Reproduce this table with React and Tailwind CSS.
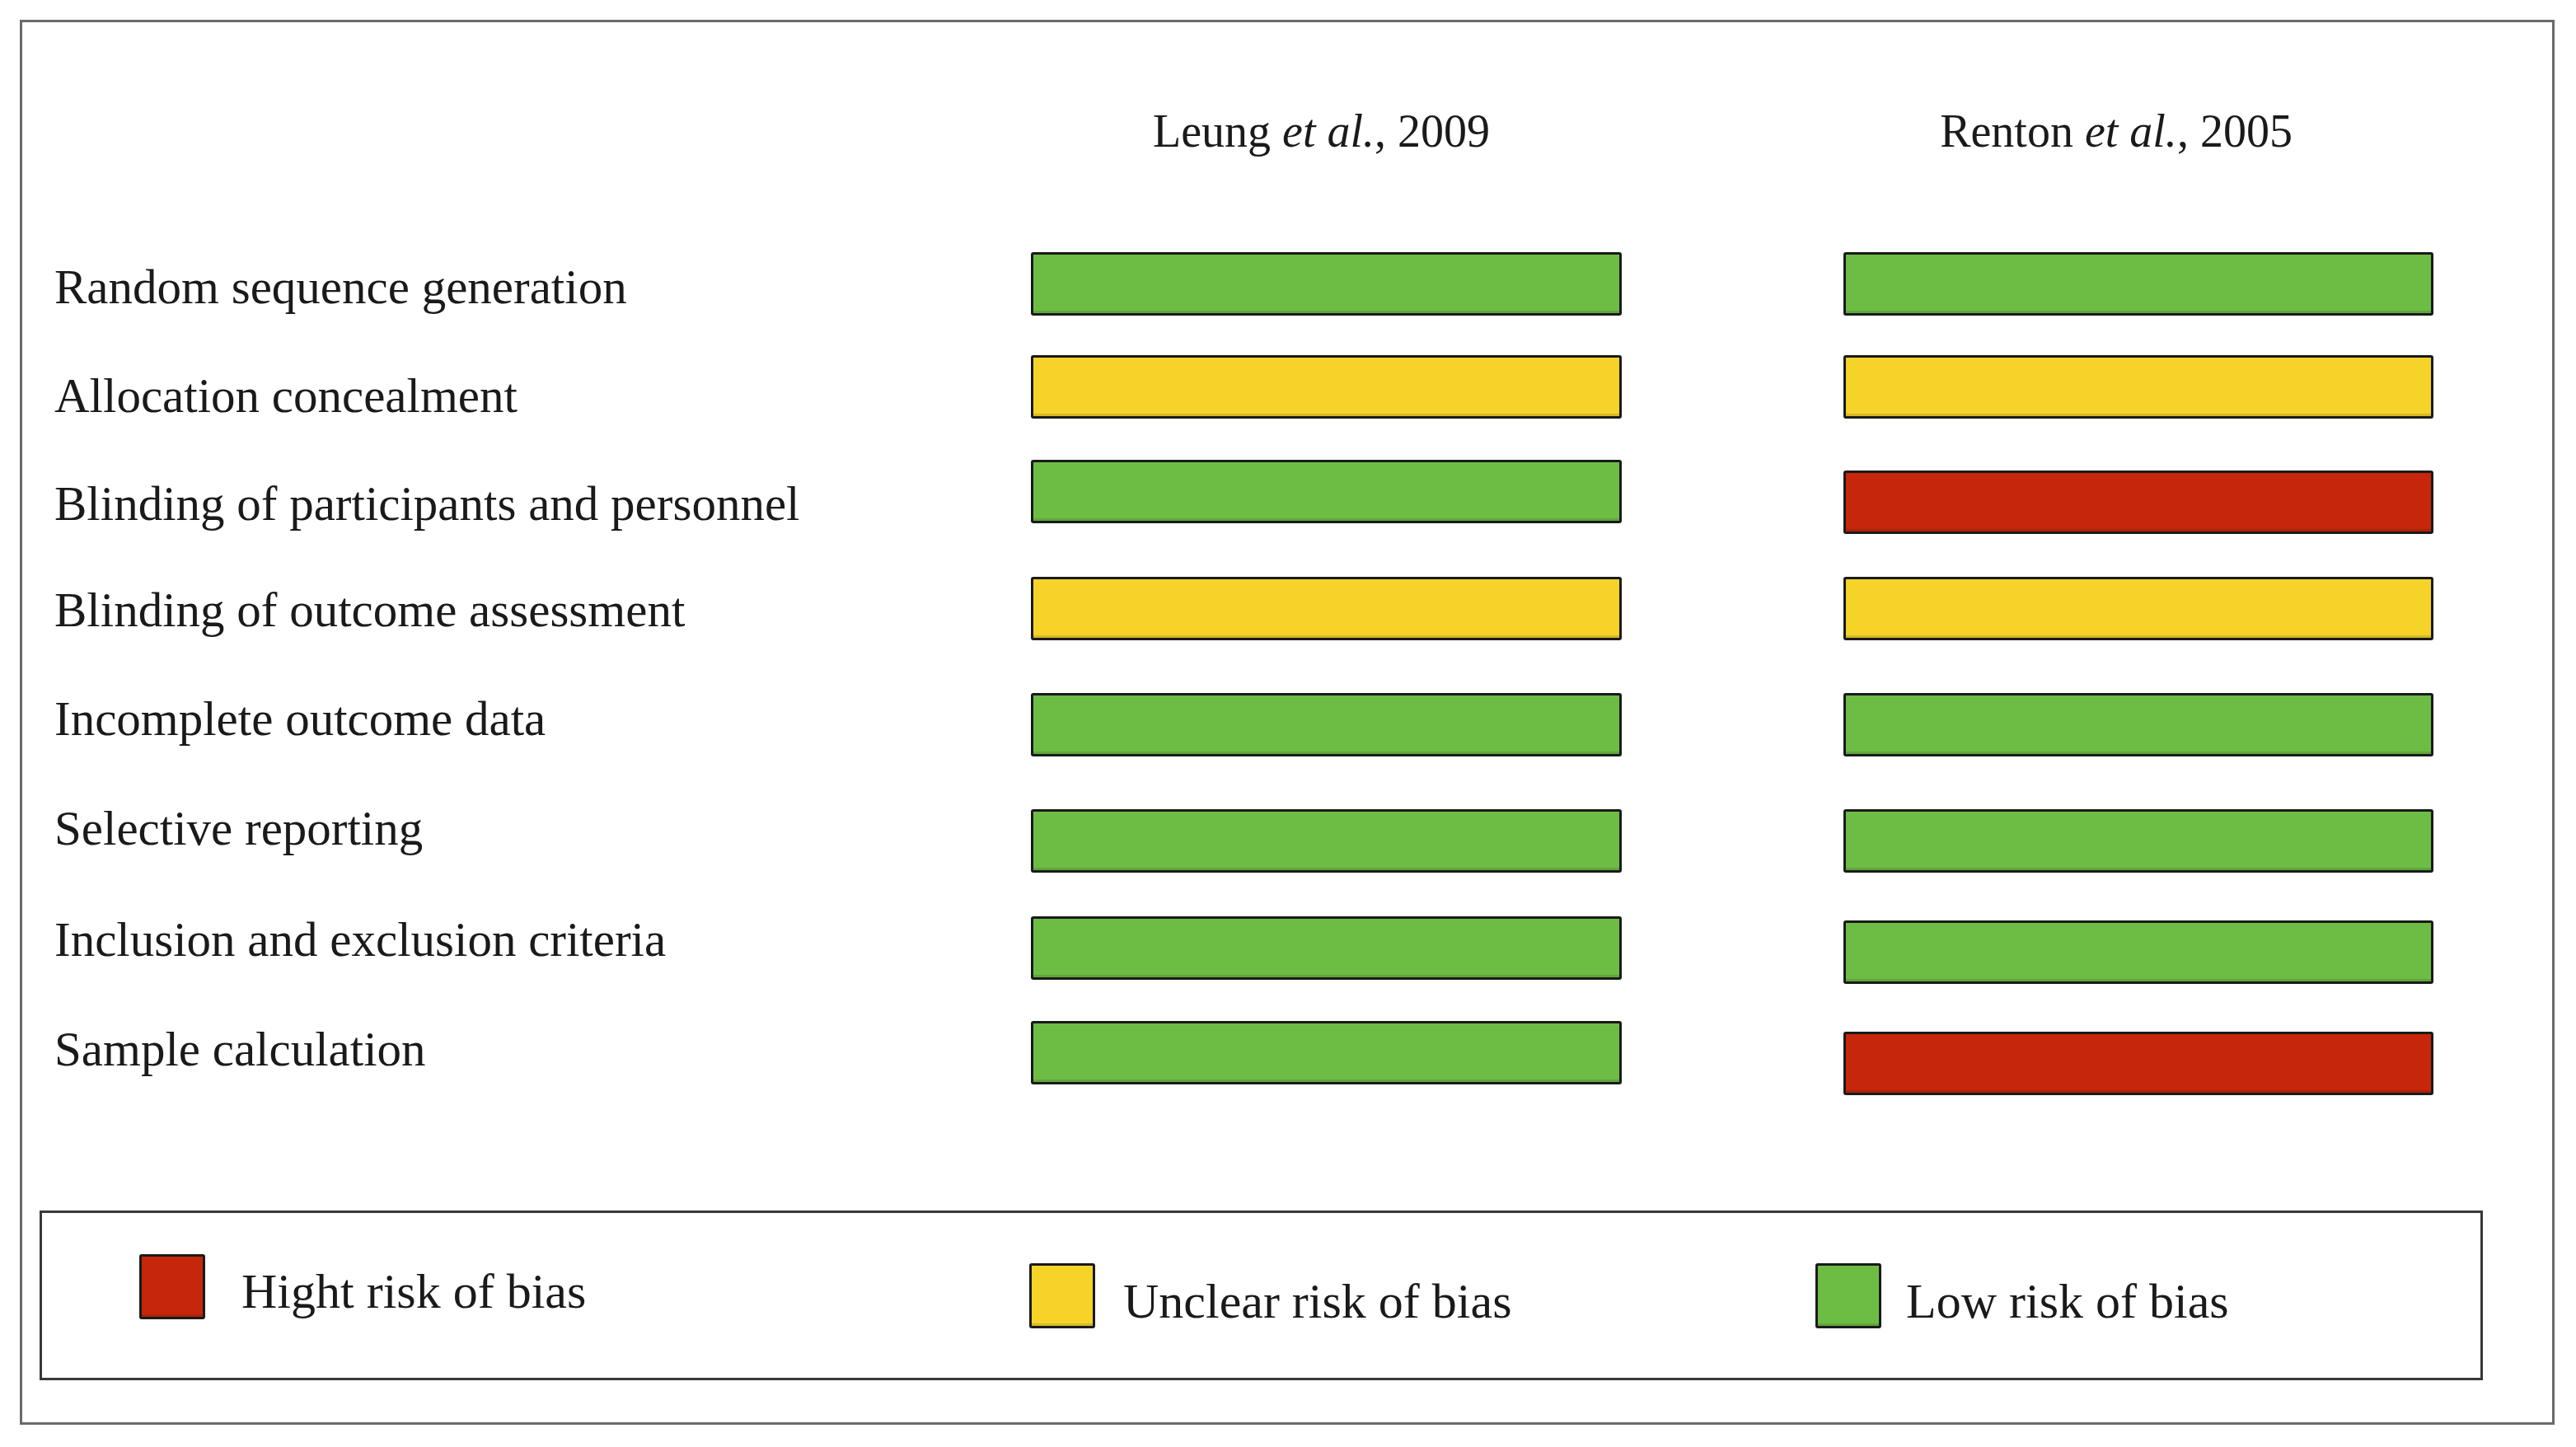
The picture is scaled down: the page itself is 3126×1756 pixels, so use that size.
import React from "react";

const FILL = {
  green: "bg-[#6dbd45]",
  yellow: "bg-[#f5d329]",
  red: "bg-[#c6260a]",
};

// one entry per domain; offsets keep the bars where the figure puts them
const rows = [
  { label: "Random sequence generation", h: "h-[125px]", lt: "mt-[13px]", a: "green", at: "mt-0", b: "green", bt: "mt-0" },
  { label: "Allocation concealment", h: "h-[127px]", lt: "mt-[20px]", a: "yellow", at: "mt-0", b: "yellow", bt: "mt-0" },
  { label: "Blinding of participants and personnel", h: "h-[142px]", lt: "mt-[24px]", a: "green", at: "mt-0", b: "red", bt: "mt-[13px]" },
  { label: "Blinding of outcome assessment", h: "h-[141px]", lt: "mt-[11px]", a: "yellow", at: "mt-0", b: "yellow", bt: "mt-0" },
  { label: "Incomplete outcome data", h: "h-[135px]", lt: "mt-[2px]", a: "green", at: "mt-0", b: "green", bt: "mt-0" },
  { label: "Selective reporting", h: "h-[135px]", lt: "mt-0", a: "green", at: "mt-[6px]", b: "green", bt: "mt-[6px]" },
  { label: "Inclusion and exclusion criteria", h: "h-[128px]", lt: "mt-0", a: "green", at: "mt-[1px]", b: "green", bt: "mt-[6px]" },
  { label: "Sample calculation", h: "h-[89px]", lt: "mt-[5px]", a: "green", at: "mt-0", b: "red", bt: "mt-[13px]" },
];

function Bar({ tone, offset, width }) {
  return (
    <div
      className={`${offset} ${width} h-[77px] ${FILL[tone]} border-[3px] border-[#1a1a1a] rounded-[3px] shadow-[inset_0_-3px_0_rgba(0,0,0,0.12)]`}
    />
  );
}

function Swatch({ tone, offset }) {
  return (
    <div
      className={`${offset} w-[80px] h-[79px] shrink-0 ${FILL[tone]} border-[3px] border-[#1a1a1a] rounded-[3px] shadow-[inset_0_-3px_0_rgba(0,0,0,0.12)]`}
    />
  );
}

export default function App() {
  return (
    <div
      className="w-[3126px] h-[1756px] bg-white text-[#1a1a1a] overflow-hidden"
      style={{ fontFamily: '"Liberation Serif", "DejaVu Serif", serif' }}
    >
      <div className="ml-[24px] mt-[24px] w-[3076px] h-[1705px] border-[3px] border-[#6a6a6a]">
        {/* study headers */}
        <div className="mt-[104px] flex text-[56px] leading-[56px]">
          <div className="w-[1224px]" />
          <div className="w-[717px] text-center pr-[12px] whitespace-nowrap">
            Leung <i>et al.</i>, 2009
          </div>
          <div className="w-[269px]" />
          <div className="w-[716px] text-center pr-[54px] whitespace-nowrap">
            Renton <i>et al.</i>, 2005
          </div>
        </div>

        {/* domains */}
        <div className="mt-[119px]">
          {rows.map((r) => (
            <div key={r.label} className={`${r.h} flex items-start`}>
              <div className={`w-[1224px] pl-[39px] ${r.lt} text-[59px] leading-[59px] whitespace-nowrap`}>
                {r.label}
              </div>
              <Bar tone={r.a} offset={r.at} width="w-[717px]" />
              <div className="w-[269px]" />
              <Bar tone={r.b} offset={r.bt} width="w-[716px]" />
            </div>
          ))}
        </div>

        {/* legend */}
        <div className="mt-[141px] ml-[21px] w-[2965px] h-[206px] border-[3px] border-[#383838] flex items-start text-[60px] leading-[60px]">
          <div className="ml-[118px] w-[1080px] flex items-start">
            <Swatch tone="red" offset="mt-[50px]" />
            <span className="ml-[44px] mt-[65px] whitespace-nowrap">Hight risk of bias</span>
          </div>
          <div className="w-[954px] flex items-start">
            <Swatch tone="yellow" offset="mt-[61px]" />
            <span className="ml-[34px] mt-[77px] whitespace-nowrap">Unclear risk of bias</span>
          </div>
          <div className="flex items-start">
            <Swatch tone="green" offset="mt-[61px]" />
            <span className="ml-[30px] mt-[77px] whitespace-nowrap">Low risk of bias</span>
          </div>
        </div>
      </div>
    </div>
  );
}
